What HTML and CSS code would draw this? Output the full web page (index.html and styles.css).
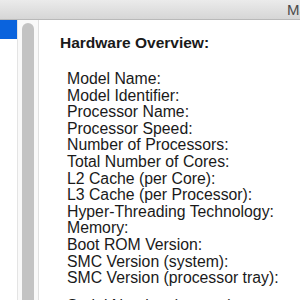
FILE: index.html
```html
<!DOCTYPE html>
<html lang="en">
<head>
  <meta charset="UTF-8">
  <title>System Information</title>
  <link rel="stylesheet" href="styles.css">
</head>
<body>
  <header class="titlebar">
    <span class="title">MacBook Pro</span>
  </header>

  <div class="main">
    <div class="sidebar">
      <div class="sidebar-item selected"></div>
    </div>

    <div class="scroller">
      <div class="thumb"></div>
    </div>

    <div class="content">
      <h2 class="heading">Hardware Overview:</h2>
      <ul class="fields">
        <li>Model Name:</li>
        <li>Model Identifier:</li>
        <li>Processor Name:</li>
        <li>Processor Speed:</li>
        <li>Number of Processors:</li>
        <li>Total Number of Cores:</li>
        <li>L2 Cache (per Core):</li>
        <li>L3 Cache (per Processor):</li>
        <li>Hyper-Threading Technology:</li>
        <li>Memory:</li>
        <li>Boot ROM Version:</li>
        <li>SMC Version (system):</li>
        <li>SMC Version (processor tray):</li>
        <li class="gap">Serial Number (system):</li>
      </ul>
    </div>
  </div>
</body>
</html>
```

FILE: styles.css
```css
* {
  margin: 0;
  padding: 0;
  box-sizing: border-box;
}

html, body {
  height: 100%;
  overflow: hidden;
  font-family: "Liberation Sans", Arial, sans-serif;
  background: #fff;
  color: #1a1a1a;
}

.titlebar {
  height: 20px;
  background: linear-gradient(to bottom, #ebebeb, #d6d6d6);
  border-bottom: 1px solid #b9b9b9;
  display: flex;
  align-items: center;
  padding-left: 287px;
  white-space: nowrap;
  overflow: hidden;
}

.title {
  font-size: 15px;
  color: #4a4a4a;
}

.main {
  display: flex;
  height: calc(100% - 20px);
}

.sidebar {
  width: 17px;
  background: #fff;
}

.sidebar-item {
  height: 19px;
}

.sidebar-item.selected {
  background: #0a63dd;
}

.scroller {
  width: 22px;
  background: #f9f9f9;
  border-left: 1px solid #e4e4e4;
  border-right: 1px solid #e0e0e0;
  padding: 3px 0 0 4px;
}

.thumb {
  width: 12px;
  height: 400px;
  background: #c3c3c3;
  border-radius: 6px;
}

.content {
  flex: 1;
  padding: 15px 0 0 21px;
  white-space: nowrap;
  overflow: hidden;
}

.heading {
  font-size: 15.5px;
  font-weight: bold;
  line-height: 16px;
  margin-bottom: 20px;
}

.fields {
  list-style: none;
  padding-left: 7px;
  font-size: 15.8px;
  line-height: 16.6px;
}

.fields .gap {
  margin-top: 11px;
}
```
